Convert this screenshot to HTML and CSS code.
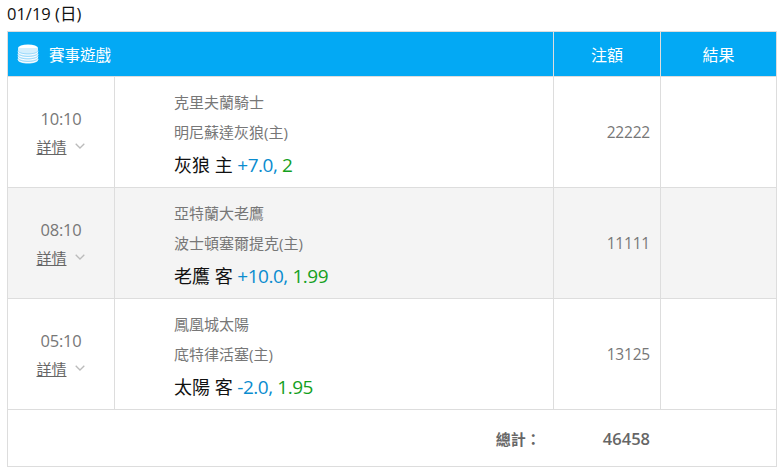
FILE: index.html
```html
<!DOCTYPE html>
<html lang="zh-Hant">
<head>
<meta charset="utf-8">
<title>01/19</title>
<link rel="stylesheet" href="styles.css">
</head>
<body>
<div class="date">01/19 (日)</div>
<table class="board">
<colgroup><col class="c-time"><col class="c-game"><col class="c-bet"><col class="c-result"></colgroup>
<thead>
<tr>
<th colspan="2" class="head-title"><div class="title-wrap">
<svg class="stack" width="22" height="20" viewBox="0 0 22 20"><ellipse cx="11" cy="4" rx="10" ry="3.6" fill="#fff"/><path d="M1 4v12c0 2 4.5 3.6 10 3.6S21 18 21 16V4" fill="#d4effd"/><g fill="none" stroke="#fff" stroke-width="1"><path d="M1 7.5c0 2 4.5 3.4 10 3.4s10-1.400 10-3.400"/><path d="M1 10c0 2 4.500 3.400 10 3.400S21 12 21 10"/><path d="M1 12.500c0 2 4.500 3.400 10 3.400s10-1.400 10-3.400"/><path d="M1 15c0 2 4.500 3.400 10 3.400S21 17 21 15"/></g><g fill="none" stroke="#7fd0fa" stroke-width=".7"><path d="M1 6.500c0 2 4.500 3.400 10 3.400s10-1.400 10-3.400"/><path d="M1 9c0 2 4.500 3.400 10 3.400S21 11 21 9"/><path d="M1 11.500c0 2 4.500 3.400 10 3.400s10-1.400 10-3.400"/><path d="M1 14c0 2 4.500 3.400 10 3.400S21 16 21 14"/></g></svg>
<span>賽事遊戲</span></div></th>
<th class="head-col">注額</th>
<th class="head-col">結果</th>
</tr>
</thead>
<tbody>
<tr>
<td class="time-cell"><div class="time">10:10</div><div class="detail"><span class="detail-link">詳情</span><svg class="chev" width="10" height="6" viewBox="0 0 10 6"><path d="M.7.7 5 5l4.300-4.300" fill="none" stroke="#bbb" stroke-width="1.300"/></svg></div></td>
<td class="game-cell"><div class="team">克里夫蘭騎士</div><div class="team">明尼蘇達灰狼(主)</div><div class="pick">灰狼 主 <span class="line">+7.0,</span> <span class="odds">2</span></div></td>
<td class="amount">22222</td><td></td>
</tr>
<tr class="alt">
<td class="time-cell"><div class="time">08:10</div><div class="detail"><span class="detail-link">詳情</span><svg class="chev" width="10" height="6" viewBox="0 0 10 6"><path d="M.7.7 5 5l4.300-4.300" fill="none" stroke="#bbb" stroke-width="1.300"/></svg></div></td>
<td class="game-cell"><div class="team">亞特蘭大老鷹</div><div class="team">波士頓塞爾提克(主)</div><div class="pick">老鷹 客 <span class="line">+10.0,</span> <span class="odds">1.99</span></div></td>
<td class="amount">11111</td><td></td>
</tr>
<tr>
<td class="time-cell"><div class="time">05:10</div><div class="detail"><span class="detail-link">詳情</span><svg class="chev" width="10" height="6" viewBox="0 0 10 6"><path d="M.7.7 5 5l4.300-4.300" fill="none" stroke="#bbb" stroke-width="1.300"/></svg></div></td>
<td class="game-cell"><div class="team">鳳凰城太陽</div><div class="team">底特律活塞(主)</div><div class="pick">太陽 客 <span class="line">-2.0,</span> <span class="odds">1.95</span></div></td>
<td class="amount">13125</td><td></td>
</tr>
</tbody>
<tfoot>
<tr><td colspan="4" class="foot"><span class="foot-label">總計：</span><span class="foot-sum">46458</span></td></tr>
</tfoot>
</table>
</body>
</html>
```
FILE: styles.css
```css
* { box-sizing: border-box; }
html, body { margin: 0; padding: 0; background: #fff; }
body {
  padding: 0 0 0 7px;
  font-family: "Open Sans", "Noto Sans CJK TC", sans-serif;
  color: #666;
  overflow: hidden;
}
.date { height: 31px; padding-top: 3px; font-size: 16.500px; line-height: 22px; color: #111; }
.board { width: 770px; border-collapse: collapse; table-layout: fixed; }
.c-time { width: 107px; }
.c-game { width: 439px; }
.c-bet { width: 107px; }
.c-result { width: 116px; }
.board th, .board td { border: 1px solid #ddd; padding: 0; }
thead tr { height: 45px; }
th { background: #03a9f4; color: #fff; font-weight: 400; font-size: 16px; }
.head-title { text-align: left; }
.title-wrap { display: flex; align-items: center; gap: 10px; padding-left: 9px; font-size: 15.500px; }
tbody tr { height: 111px; }
.alt td { background: #f4f4f4; }
.time-cell { text-align: center; }
.time { font-size: 16.500px; letter-spacing: -.2px; line-height: 22px; color: #777; margin-bottom: 7px; }
.detail { display: flex; justify-content: center; align-items: center; gap: 8px; font-size: 15px; line-height: 20px; color: #666; padding-right: 1px; }
.detail-link { text-decoration: underline; }
.chev { margin-top: -1px; }
.game-cell { padding-left: 59px !important; }
.team { font-size: 15px; line-height: 30px; color: #777; }
.pick { font-size: 18px; line-height: 32px; color: #111; margin-top: 2px; margin-bottom: -3px; }
.line, .odds { font-size: 19px; letter-spacing: -.5px; }
.line { color: #0a8ccf; }
.odds { color: #14a01e; }
.amount { text-align: right; padding-right: 10px !important; font-size: 15.500px; letter-spacing: -.2px; color: #777; }
.foot { height: 57px; text-align: right; padding-right: 126px !important; font-size: 15px; font-weight: 600; color: #666; }
.foot-label { display: inline-block; margin-right: 62px; letter-spacing: 0; }
.foot-sum { display: inline-block; font-size: 16.500px; }
```
